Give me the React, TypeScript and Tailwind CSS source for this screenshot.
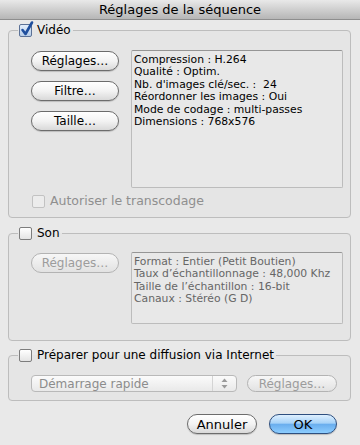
import { FC, ReactNode } from "react";

type BoxProps = { checked?: boolean; disabled?: boolean };

const CheckBox: FC<BoxProps> = ({ checked, disabled }) => (
  <span
    className={`relative w-[13px] h-[13px] shrink-0 rounded-[2px] border ${
      disabled
        ? "border-[#c2c2c2] bg-[#ececec]"
        : checked
        ? "border-[#5b7196] bg-gradient-to-b from-[#e3eefb] to-[#b7cde8]"
        : "border-[#7d7d7d] bg-gradient-to-b from-white to-[#e4e4e4]"
    }`}
  >
    {checked && (
      <svg className="absolute -top-[3px] left-[1px] overflow-visible" width="12" height="14" viewBox="0 0 12 14">
        <path d="M1.5 8 L4.5 12 L11 0.5" fill="none" stroke="#1f4f9e" strokeWidth="2.6" strokeLinecap="round" strokeLinejoin="round" />
      </svg>
    )}
  </span>
);

type ButtonProps = { label: string; disabled?: boolean; className?: string };

const AquaButton: FC<ButtonProps> = ({ label, disabled, className = "" }) => (
  <div
    className={`flex items-center justify-center rounded-full border text-[12px] leading-none ${
      disabled
        ? "border-[#b3b3b3] bg-gradient-to-b from-[#f7f7f7] to-[#e2e2e2] text-[#9c9c9c]"
        : "border-[#6c6c6c] bg-gradient-to-b from-white via-[#f3f3f3] to-[#d9d9d9] text-black shadow-[0_1px_1px_rgba(0,0,0,0.18)]"
    } ${className}`}
  >
    {label}
  </div>
);

type GroupProps = { label: string; checked?: boolean; className?: string; children: ReactNode };

const Group: FC<GroupProps> = ({ label, checked, className = "", children }) => (
  <fieldset className={`w-[343px] rounded-[4px] border border-[#bdbdbd] bg-[#e5e5e5] ${className}`}>
    <legend className="ml-[9px] pl-[1px] pr-[2px] h-[14px] flex items-center gap-[5px] text-[12px] leading-none text-black">
      <CheckBox checked={checked} />
      <span>{label}</span>
    </legend>
    {children}
  </fieldset>
);

type InfoProps = { lines: string[]; muted?: boolean; className?: string };

const InfoBox: FC<InfoProps> = ({ lines, muted, className = "" }) => (
  <div
    className={`w-[212px] rounded-[2px] border border-[#bcbcbc] border-t-[#959595] bg-[#e8e8e8] pl-[2px] pt-[3px] text-[10.8px] leading-[12.4px] ${
      muted ? "text-[#666666]" : "text-black"
    } ${className}`}
  >
    {lines.map(line => (
      <div key={line} className="whitespace-pre">
        {line}
      </div>
    ))}
  </div>
);

const videoInfo = [
  "Compression : H.264",
  "Qualité : Optim.",
  "Nb. d'images clé/sec. :  24",
  "Réordonner les images : Oui",
  "Mode de codage : multi-passes",
  "Dimensions : 768x576",
];

const audioInfo = [
  "Format : Entier (Petit Boutien)",
  "Taux d’échantillonnage : 48,000 Khz",
  "Taille de l’échantillon : 16-bit",
  "Canaux : Stéréo (G D)",
];

const App: FC = () => {
  return (
    <div className="w-[360px] h-[445px] bg-[#e9e9e9] flex flex-col font-['DejaVu_Sans',sans-serif]">
      <div className="h-[20px] shrink-0 flex items-center justify-center border-b border-[#8e8e8e] bg-gradient-to-b from-[#e9e9e9] to-[#b6b6b6] text-[13px] text-black">
        Réglages de la séquence
      </div>

      <div className="flex flex-col pl-[8px] pt-[3px]">
        <Group label="Vidéo" checked>
          <div className="flex pl-[22px] pt-[13px]">
            <div className="flex flex-col gap-[10px] pt-[1px]">
              <AquaButton label="Réglages…" className="w-[88px] h-[20px]" />
              <AquaButton label="Filtre…" className="w-[88px] h-[20px]" />
              <AquaButton label="Taille…" className="w-[88px] h-[20px]" />
            </div>
            <InfoBox lines={videoInfo} className="ml-[12px] h-[138px]" />
          </div>
          <div className="flex items-center gap-[5px] pl-[23px] mt-[6px] mb-[9px] h-[14px] text-[12.5px] leading-none text-[#8f8f8f]">
            <CheckBox disabled />
            <span>Autoriser le transcodage</span>
          </div>
        </Group>

        <Group label="Son" className="mt-[8px]">
          <div className="flex pl-[22px] pt-[12px] pb-[16px]">
            <AquaButton label="Réglages…" disabled className="w-[88px] h-[20px] mt-[1px]" />
            <InfoBox lines={audioInfo} muted className="ml-[12px] h-[72px]" />
          </div>
        </Group>

        <Group label="Préparer pour une diffusion via Internet" className="mt-[7px]">
          <div className="flex items-center pl-[22px] pt-[13px] pb-[8px]">
            <div className="w-[206px] h-[17px] flex rounded-[4px] border border-[#b9b9b9] bg-gradient-to-b from-[#fbfbfb] to-[#e9e9e9]">
              <div className="flex-1 flex items-center pl-[7px] text-[12px] leading-none text-[#8c8c8c]">
                Démarrage rapide
              </div>
              <div className="w-[24px] flex items-center justify-center border-l border-[#d4d4d4]">
                <svg width="7" height="11" viewBox="0 0 7 11">
                  <path d="M3.5 0.5 L6.5 4 L0.5 4 Z" fill="#9a9a9a" />
                  <path d="M3.5 10.5 L6.5 7 L0.5 7 Z" fill="#9a9a9a" />
                </svg>
              </div>
            </div>
            <AquaButton label="Réglages…" disabled className="ml-[10px] w-[90px] h-[17px]" />
          </div>
        </Group>
      </div>

      <div className="flex justify-end gap-[12px] pr-[23px] mt-[13px]">
        <AquaButton label="Annuler" className="w-[70px] h-[20px] text-[13px]" />
        <div className="w-[68px] h-[20px] flex items-center justify-center rounded-full border border-[#2e4f7f] bg-[linear-gradient(to_bottom,#dff0ff_0%,#a6d2f8_45%,#6aaeee_52%,#8ccdff_100%)] text-[13px] leading-none text-black shadow-[0_1px_1px_rgba(0,0,0,0.2)]">
          OK
        </div>
      </div>
    </div>
  );
};

export default App;
